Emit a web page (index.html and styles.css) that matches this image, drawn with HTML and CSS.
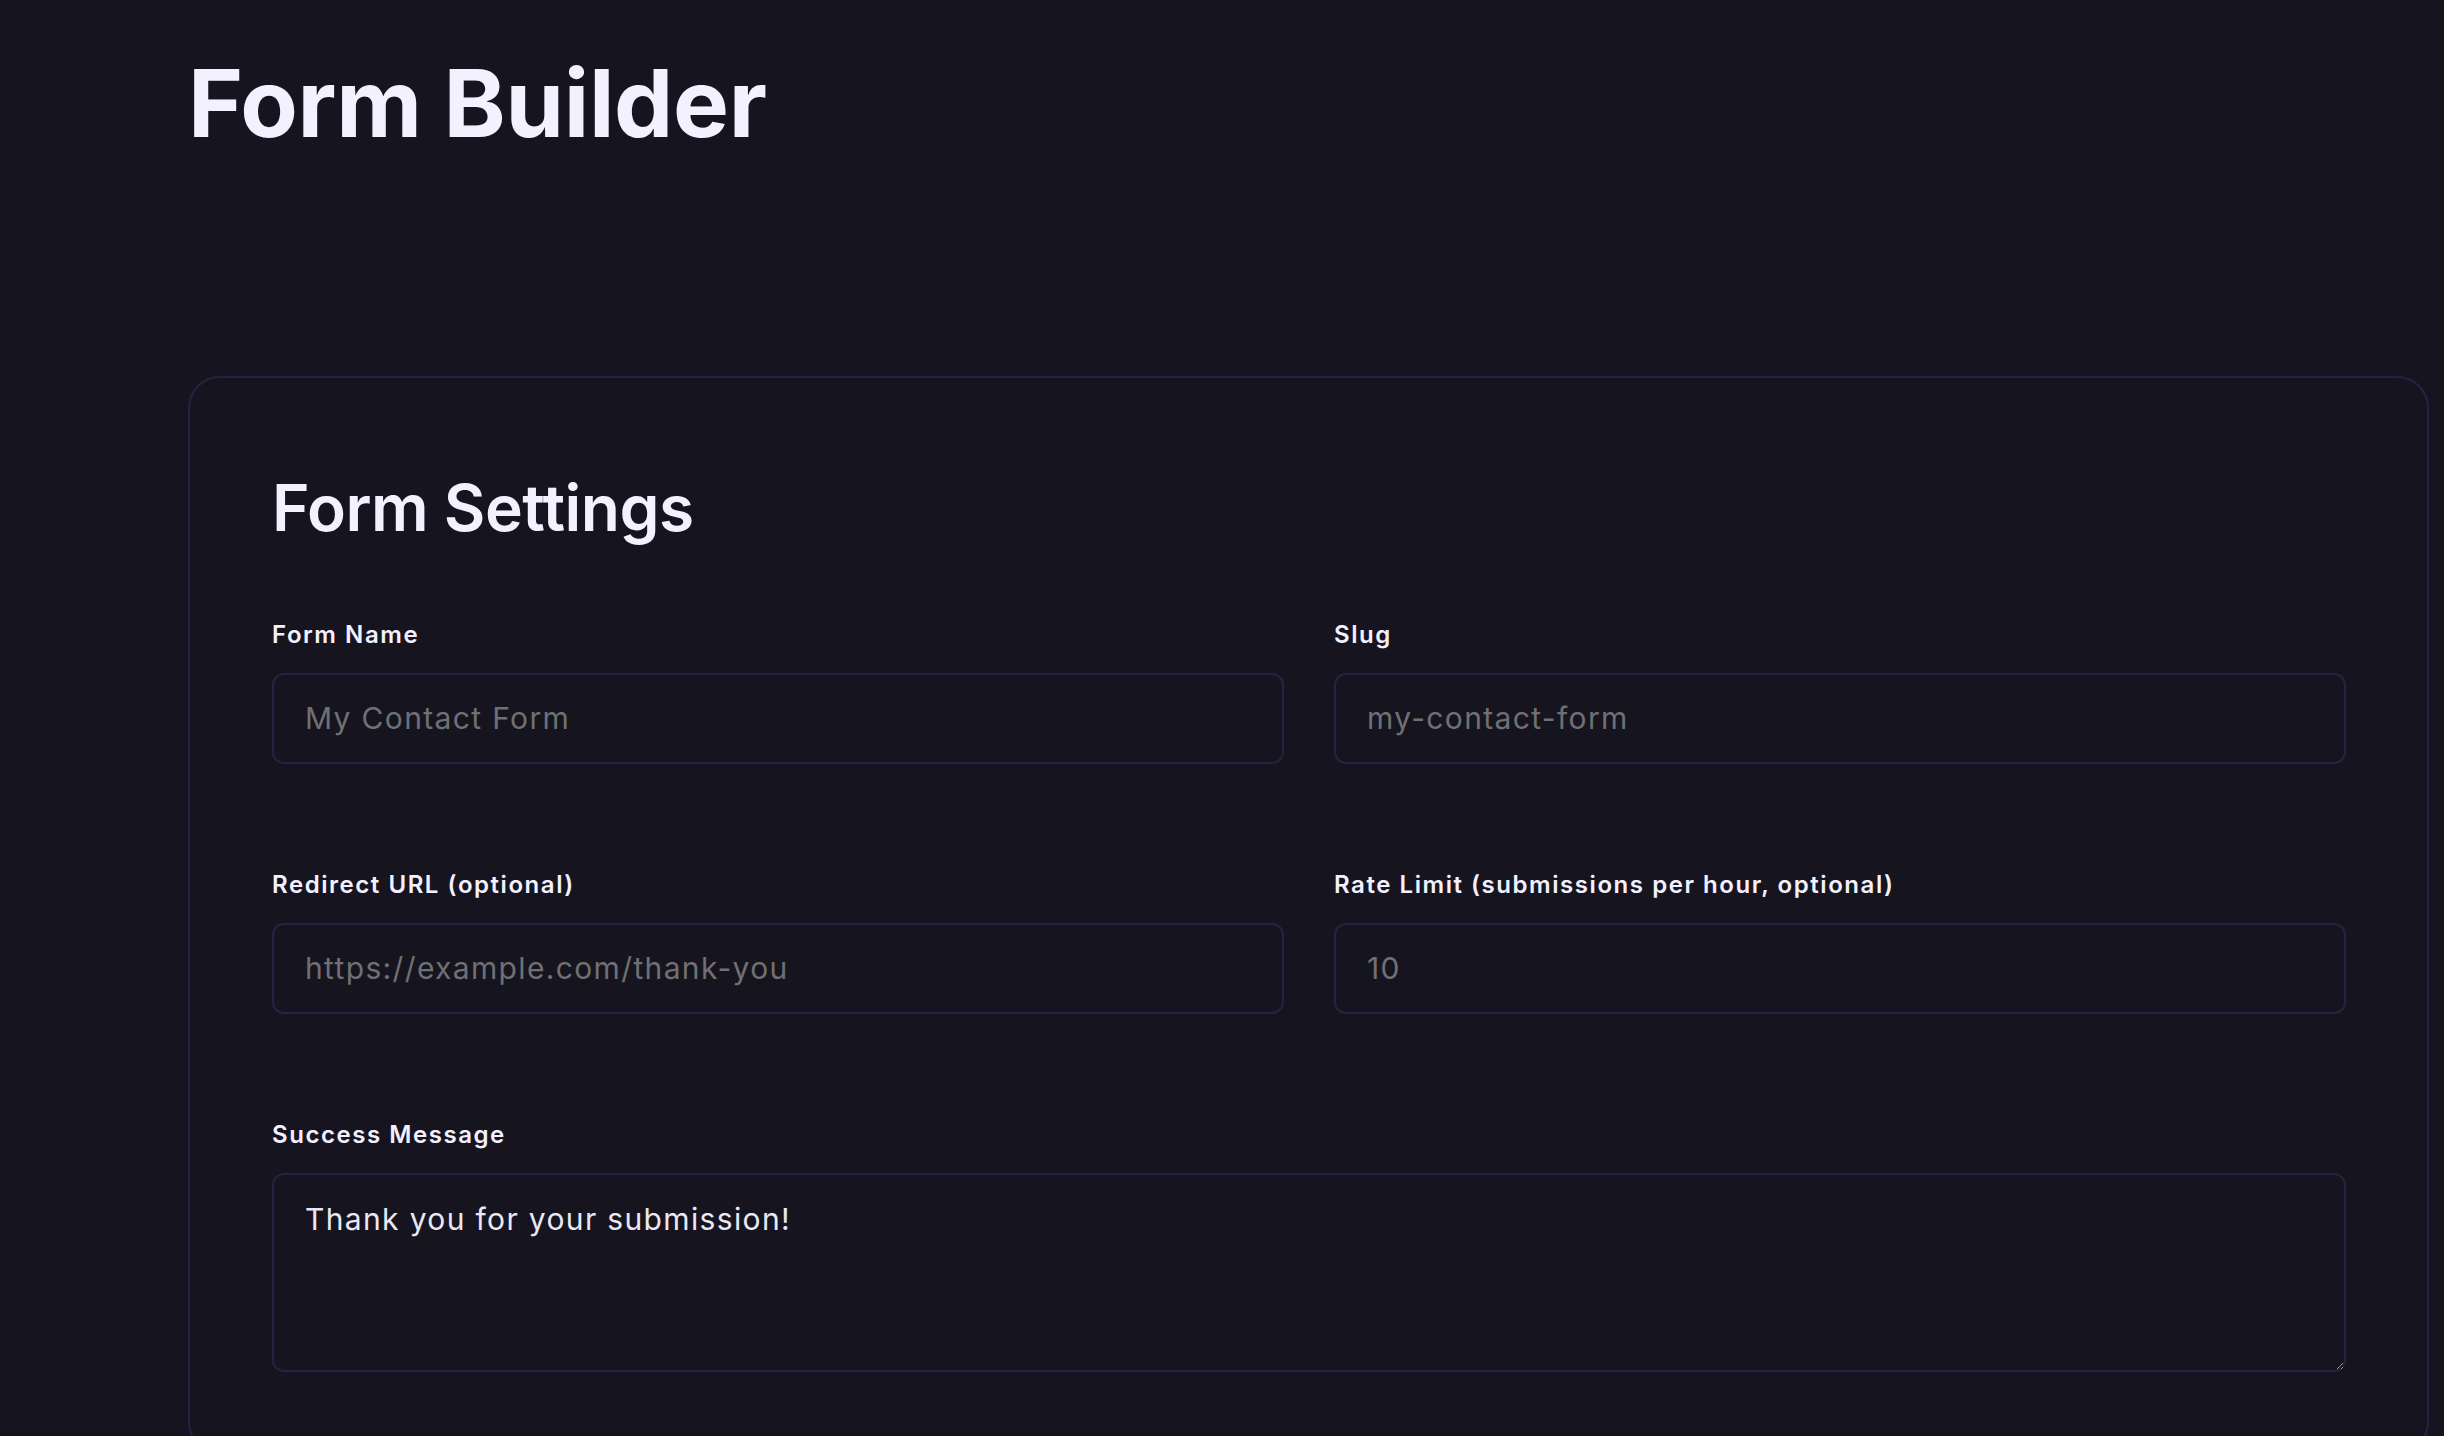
FILE: index.html
```html
<!DOCTYPE html>
<html lang="en">
<head>
<meta charset="utf-8">
<title>Form Builder</title>
<link rel="stylesheet" href="styles.css">
</head>
<body>
<main class="page">
  <h1 class="page-title">Form Builder</h1>
  <section class="card">
    <h2 class="card-title">Form Settings</h2>
    <div class="grid">
      <div class="field">
        <label class="label" for="name">Form Name</label>
        <input class="input" id="name" type="text" placeholder="My Contact Form">
      </div>
      <div class="field">
        <label class="label" for="slug">Slug</label>
        <input class="input" id="slug" type="text" placeholder="my-contact-form">
      </div>
      <div class="field">
        <label class="label" for="redirect">Redirect URL (optional)</label>
        <input class="input" id="redirect" type="text" placeholder="https://example.com/thank-you">
      </div>
      <div class="field">
        <label class="label" for="rate">Rate Limit (submissions per hour, optional)</label>
        <input class="input" id="rate" type="text" placeholder="10">
      </div>
      <div class="field field-wide">
        <label class="label" for="msg">Success Message</label>
        <textarea class="textarea" id="msg">Thank you for your submission!</textarea>
      </div>
    </div>
  </section>
</main>
</body>
</html>
```

FILE: styles.css
```css
* { box-sizing: border-box; }

html, body {
  margin: 0;
  background: #16151f;
  color: #f3f0ff;
  font-family: "Inter", "Noto Sans", sans-serif;
  overflow: hidden;
}

.page {
  padding: 47px 15px 0 188px;
  min-height: 1436px;
}

.page-title {
  margin: 0;
  font-size: 94px;
  line-height: 1.2;
  font-weight: 700;
  letter-spacing: -0.3px;
  color: #f3f0ff;
}

.card {
  margin-top: 216px;
  border: 2px solid #2d1f42;
  border-radius: 32px;
  padding: 92px 81px 80px 82px;
}

.card-title {
  margin: 0 0 70px;
  font-size: 64px;
  line-height: 1.2;
  font-weight: 600;
  letter-spacing: -0.5px;
  color: #f3f0ff;
}

.grid {
  display: grid;
  grid-template-columns: 1fr 1fr;
  column-gap: 50px;
  row-gap: 103px;
}

.field {
  display: flex;
  flex-direction: column;
}

.field-wide { grid-column: 1 / -1; }

.label {
  font-size: 24px;
  line-height: 36px;
  font-weight: 600;
  letter-spacing: 1.55px;
  color: #f3f0ff;
  margin-bottom: 20px;
}

.input, .textarea {
  width: 100%;
  font-family: "Inter", "Noto Sans", sans-serif;
  font-size: 30px;
  letter-spacing: 1.35px;
  color: #ebe8f5;
  background: #16151f;
  border: 2px solid #2d1f42;
  border-radius: 12px;
  outline: none;
}

.input {
  height: 91px;
  padding: 0 31px;
}

.textarea {
  height: 199px;
  padding: 22px 31px;
  line-height: 45px;
  resize: vertical;
}

.input::placeholder { color: #707074; }
```
